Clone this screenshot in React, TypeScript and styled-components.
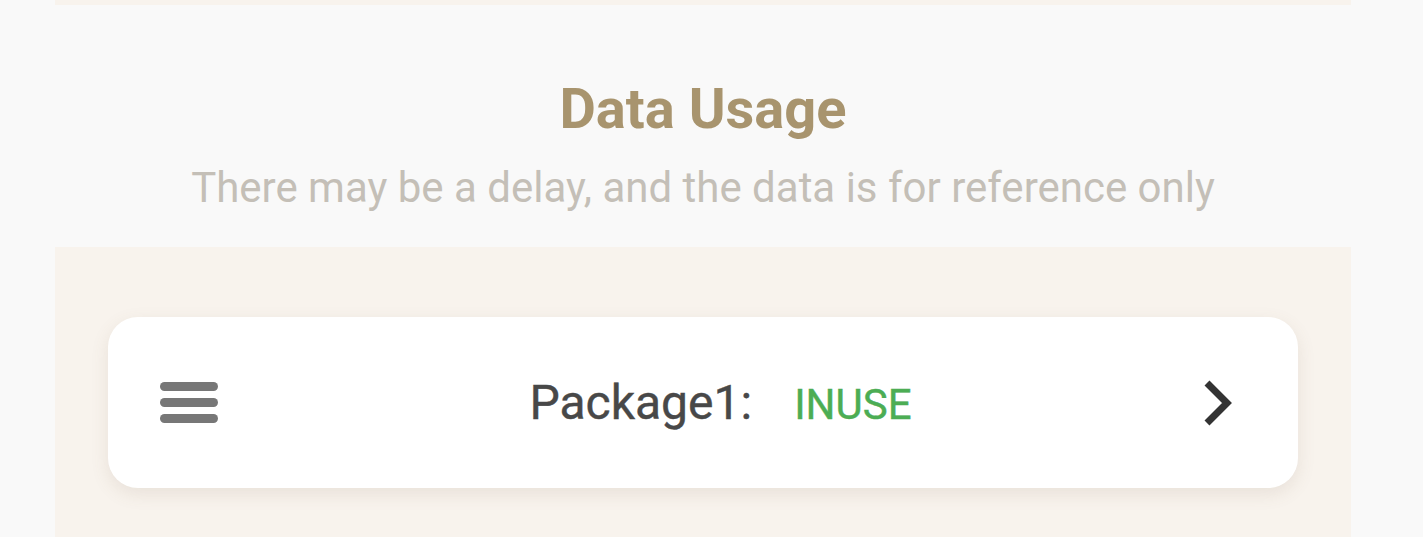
import React from "react";
import styled, { createGlobalStyle } from "styled-components";

const GlobalStyle = createGlobalStyle`
  html, body {
    margin: 0;
    padding: 0;
    background-color: #f9f9f9;
    font-family: Roboto, "Noto Sans", "Liberation Sans", sans-serif;
  }
`;

const Page = styled.div`
  width: 1296px;
  margin-left: 55px;
`;

const TopStrip = styled.div`
  height: 5px;
  background-color: #f8f3ed;
`;

const Header = styled.div`
  display: flex;
  flex-direction: column;
  align-items: center;
  padding: 71px 0 35px;
`;

const Title = styled.h1`
  margin: 0;
  font-size: 56px;
  line-height: 66px;
  font-weight: 700;
  color: #a8946e;
`;

const Subtitle = styled.p`
  margin: 21px 0 0;
  font-size: 42px;
  line-height: 49px;
  font-weight: 400;
  color: #c4bfb7;
`;

const Section = styled.div`
  background-color: #f8f3ed;
  padding: 70px 53px 120px;
`;

const Card = styled.div`
  display: flex;
  align-items: center;
  height: 171px;
  padding: 0 65px 0 52px;
  background-color: #fff;
  border-radius: 30px;
  box-shadow: 0 6px 18px rgba(120, 100, 70, 0.12);
`;

const Middle = styled.div`
  flex: 1;
  display: flex;
  justify-content: center;
  align-items: baseline;
  gap: 42px;
  padding-left: 20px;
`;

const Label = styled.span`
  font-size: 48px;
  font-weight: 400;
  color: #484848;
  -webkit-text-stroke: 0.4px #484848;
`;

const Status = styled.span<{ $active?: boolean }>`
  font-size: 42px;
  font-weight: 400;
  color: ${(p) => (p.$active ? "#4cad54" : "#999")};
  -webkit-text-stroke: 0.4px ${(p) => (p.$active ? "#4cad54" : "#999")};
`;

const MenuIcon = () => (
  <svg width="58" height="41" viewBox="0 0 58 41">
    <rect x="0" y="0" width="58" height="9" rx="4.5" fill="#777" />
    <rect x="0" y="16" width="58" height="9" rx="4.5" fill="#777" />
    <rect x="0" y="32" width="58" height="9" rx="4.5" fill="#777" />
  </svg>
);

const ChevronIcon = () => (
  <svg width="30" height="46" viewBox="0 0 30 46">
    <polyline
      points="4,3 24,23 4,43"
      fill="none"
      stroke="#333"
      strokeWidth="7"
      strokeLinecap="butt"
      strokeLinejoin="miter"
    />
  </svg>
);

export default function App() {
  return (
    <Page>
      <GlobalStyle />
      <TopStrip />
      <Header>
        <Title>Data Usage</Title>
        <Subtitle>There may be a delay, and the data is for reference only</Subtitle>
      </Header>
      <Section>
        <Card>
          <MenuIcon />
          <Middle>
            <Label>Package1:</Label>
            <Status $active>INUSE</Status>
          </Middle>
          <ChevronIcon />
        </Card>
      </Section>
    </Page>
  );
}
